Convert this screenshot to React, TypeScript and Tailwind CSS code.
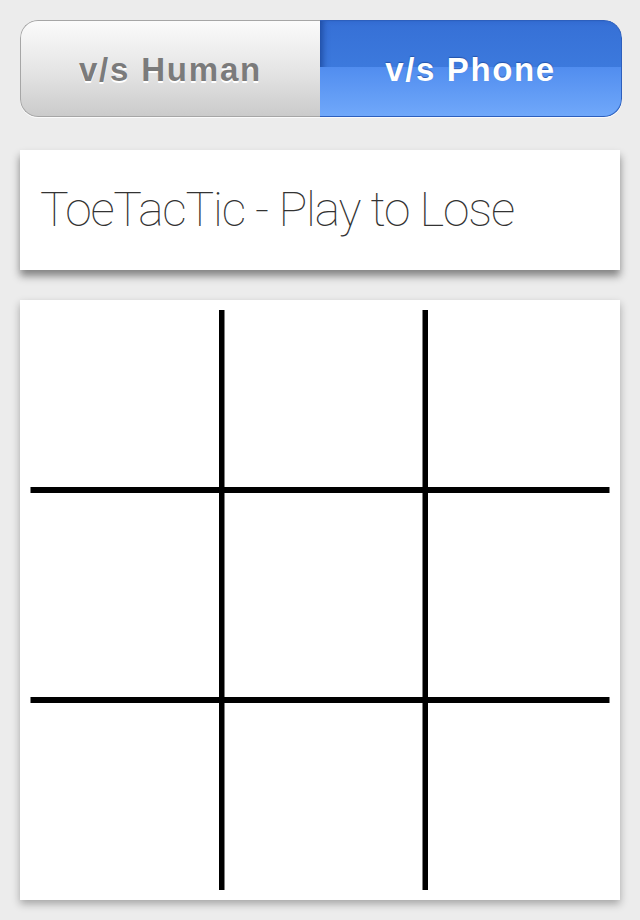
import React from "react";

const SegmentedControl = () => {
	return (
		<div className="flex h-[97px] w-[602px] overflow-hidden rounded-[18px] shadow-[0_1px_0_rgba(255,255,255,0.8)]">
			<div className="flex w-[300px] items-center justify-center rounded-l-[18px] border border-r-0 border-[#a6a6a6] bg-gradient-to-b from-[#fbfbfb] via-[#e6e6e6] to-[#cbcbcb] pt-[3px]">
				<span className="font-['Liberation_Sans',Arial,sans-serif] text-[33px] font-bold tracking-[1.8px] text-[#7b7b7b] [text-shadow:0_2px_0_#ffffff]">
					v/s Human
				</span>
			</div>
			<div className="relative flex flex-1 items-center justify-center rounded-r-[18px] border border-l-0 border-[#2d5fbd] bg-gradient-to-b from-[#3670d6] to-[#4383e4] pt-[3px] shadow-[inset_6px_0_6px_-3px_rgba(20,60,140,0.7)]">
				<div className="absolute inset-x-0 bottom-0 top-[48%] rounded-br-[18px] bg-gradient-to-b from-[#518def] to-[#70a8fa]" />
				<span className="relative font-['Liberation_Sans',Arial,sans-serif] text-[33px] font-bold tracking-[1.6px] text-white [text-shadow:0_-1px_1px_rgba(20,60,140,0.6)]">
					v/s Phone
				</span>
			</div>
		</div>
	);
};

const Board = () => {
	return (
		<svg width="600" height="600" viewBox="0 0 600 600">
			<rect x="199" y="10" width="5.5" height="580" fill="#000" />
			<rect x="402.5" y="10" width="5.5" height="580" fill="#000" />
			<rect x="10.5" y="187" width="579" height="6" fill="#000" />
			<rect x="10.5" y="397" width="579" height="6" fill="#000" />
		</svg>
	);
};

export default function App() {
	return (
		<div className="flex min-h-[920px] w-[640px] flex-col bg-[#ececec] px-5 pt-5">
			<SegmentedControl />

			<div className="mt-[33px] flex h-[120px] w-[600px] items-center bg-white pl-5 shadow-[0_6px_8px_rgba(0,0,0,0.45)]">
				<h1 className="font-['Roboto',sans-serif] text-[48px] font-thin leading-none tracking-[-1.2px] text-[#333333]">
					ToeTacTic - Play to Lose
				</h1>
			</div>

			<div className="mt-[30px] h-[600px] w-[600px] bg-white shadow-[0_4px_8px_rgba(0,0,0,0.3)]">
				<Board />
			</div>
		</div>
	);
}
